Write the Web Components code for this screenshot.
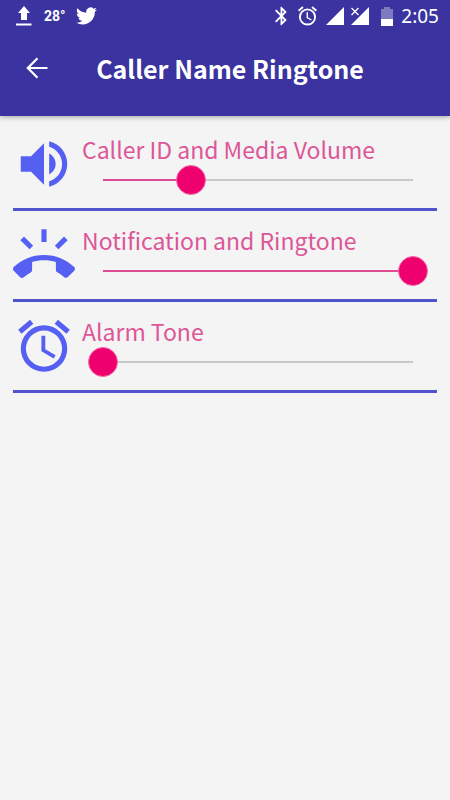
<!DOCTYPE html>
<html lang="en">
<head>
<meta charset="utf-8">
<meta name="viewport" content="width=device-width, initial-scale=1">
<title>Caller Name Ringtone</title>
<style>
  html { height: 100%; }
  body {
    margin: 0;
    min-height: 100%;
    background: #f4f4f4;
    font-family: "Noto Sans CJK SC", "Noto Sans", sans-serif;
    --bar: #3a33a0;
    --icon: #5560f2;
    --label: #dc5698;
    --accent: #ee006e;
    --rule: #5054cc;
  }
</style>
</head>
<body>
<ringtone-app></ringtone-app>

<script>
const define = (name, html, setup) => customElements.define(name, class extends HTMLElement {
  connectedCallback() {
    if (this.shadowRoot) return;
    const template = document.createElement('template');
    template.innerHTML = html;
    this.attachShadow({ mode: 'open' }).append(template.content.cloneNode(true));
    if (setup) setup(this, this.shadowRoot);
  }
});

define('status-bar', `
  <style>
    :host { display: flex; justify-content: space-between; align-items: center; height: 32px; padding: 0 11px 0 16px; color: #fff; }
    div { display: flex; align-items: center; }
    svg { display: block; fill: currentColor; }
    .temp { font: 700 14px/16px Roboto, sans-serif; margin: 0 10px 0 12px; }
    .alarm { margin: 0 9px 0 11px; }
    .sim { margin: 0 12px 0 6px; }
    time { font: 400 19px/24px "Noto Sans", sans-serif; margin-left: 8px; }
  </style>
  <div>
    <svg width="16" height="20" viewBox="0 0 16 20" aria-hidden="true"><path d="M8 0l6 7h-3v7H5V7H2zM0 17.500h15.500v2H0z"/></svg>
    <span class="temp">28°</span>
    <svg width="21" height="18" viewBox="0 2 24 20" aria-hidden="true"><path d="M23.950 4.570a10 10 0 0 1-2.820.77 4.960 4.960 0 0 0 2.160-2.720c-.95.55-2 .95-3.130 1.180a4.920 4.920 0 0 0-8.380 4.480C7.690 8.100 4.070 6.130 1.640 3.160a4.820 4.820 0 0 0-.67 2.480c0 1.710.87 3.210 2.190 4.100a4.900 4.900 0 0 1-2.230-.62v.06a4.920 4.920 0 0 0 3.950 4.830 5 5 0 0 1-2.210.08 4.940 4.940 0 0 0 4.600 3.420A9.870 9.870 0 0 1 0 19.540a14 14 0 0 0 7.560 2.210c9.050 0 14-7.500 14-13.980 0-.21 0-.42-.02-.63a9.900 9.900 0 0 0 2.410-2.570z"/></svg>
  </div>
  <div>
    <svg width="12" height="20" viewBox="5 2 13 20" aria-hidden="true"><path d="M17.710 7.710L12 2h-1v7.590L6.410 5 5 6.410 10.590 12 5 17.590 6.410 19 11 14.410V22h1l5.710-5.710-4.300-4.290 4.300-4.290zM13 5.830l1.880 1.880L13 9.590V5.830zm1.880 10.460L13 18.170v-3.760l1.880 1.880z"/></svg>
    <svg class="alarm" width="19" height="20" viewBox="2 2 20 20" aria-hidden="true"><path d="M22 5.720l-4.600-3.860-1.290 1.530 4.600 3.860L22 5.720zM7.880 3.390L6.600 1.860 2 5.710l1.290 1.530 4.590-3.850zM12.500 8H11v6l4.750 2.850.75-1.230-4-2.370V8zM12 4a9 9 0 1 0 0 18 9 9 0 0 0 0-18zm0 16a7 7 0 1 1 0-14 7 7 0 0 1 0 14z"/></svg>
    <svg width="18" height="18" viewBox="0 0 18 18" aria-hidden="true"><path d="M18 0v18H0z"/></svg>
    <svg class="sim" width="19" height="18" viewBox="0 0 19 18" aria-hidden="true"><path d="M19 0v18H1l8-8z"/><path d="M1.500 1l7 7m0-7l-7 7" stroke="#3a33a0" stroke-width="4"/><path d="M1.500 1l7 7m0-7l-7 7" stroke="#fff" stroke-width="1.300"/></svg>
    <svg width="12" height="19" viewBox="0 0 12 19" aria-hidden="true"><path opacity=".35" d="M3 0h6v2h3v10H0V2h3z"/><path d="M0 12h12v7H0z"/></svg>
    <time>2:05</time>
  </div>
`);

define('app-bar', `
  <style>
    :host { display: block; background: var(--bar); color: #fff; box-shadow: 0 1px 5px rgba(0,0,0,.35); }
    header { display: grid; grid-template-columns: 74px 1fr 64px; align-items: center; height: 72px; padding-bottom: 12px; }
    button { display: grid; place-items: center; justify-self: center; width: 48px; height: 48px; margin: 0; padding: 0; border: 0; background: none; color: inherit; }
    h1 { margin: 0; font-size: 25px; line-height: 36px; font-weight: 700; text-align: center; white-space: nowrap; }
  </style>
  <status-bar></status-bar>
  <header>
    <button type="button" aria-label="Back">
      <svg width="22" height="22" viewBox="0 0 22 22" fill="none" stroke="currentColor" stroke-width="2.200" aria-hidden="true"><path d="M11.500 1.200L1.800 11l9.700 9.800M2 11h19.500"/></svg>
    </button>
    <h1><slot></slot></h1>
  </header>
`);

define('volume-row', `
  <style>
    :host { display: grid; grid-template-columns: 62px 1fr; gap: 7px; padding: 13px 0; border-bottom: 3px solid var(--rule); }
    ::slotted(svg) { display: block; width: 62px; height: 62px; fill: var(--icon); }
    .body { display: flex; flex-direction: column; height: 62px; }
    label { font-size: 23px; line-height: 32px; color: var(--label); white-space: nowrap; }
    input {
      -webkit-appearance: none; appearance: none;
      display: block; height: 30px; margin: 0 9px 0 6px; background: none; outline: none;
    }
    input::-webkit-slider-runnable-track {
      height: 2px;
      background: linear-gradient(to right, #de4a94 var(--level), #c9c9c9 var(--level)) center / calc(100% - 30px) 2px no-repeat;
    }
    input::-webkit-slider-thumb {
      -webkit-appearance: none; appearance: none;
      width: 30px; height: 30px; margin-top: -14px; box-sizing: border-box;
      border: 1px solid #f56aaa; border-radius: 50%; background: var(--accent);
    }
  </style>
  <slot name="icon"></slot>
  <div class="body">
    <label for="level"><slot></slot></label>
    <input id="level" type="range" min="0" max="1000" step="1">
  </div>
`, (host, root) => {
  const input = root.querySelector('input');
  const paint = () => input.style.setProperty('--level', input.value / 10 + '%');
  input.value = host.getAttribute('value');
  input.addEventListener('input', paint);
  paint();
});

define('ringtone-app', `
  <style>
    :host { display: block; }
    main { padding: 4px 13px; }
  </style>
  <app-bar>Caller Name Ringtone</app-bar>
  <main>
    <volume-row value="285">
      <svg slot="icon" viewBox="0 0 24 24" aria-hidden="true"><path d="M3 9v6h4l5 5V4L7 9H3zm13.500 3c0-1.770-1.020-3.290-2.500-4.030v8.050c1.480-.73 2.500-2.250 2.500-4.020zM14 3.230v2.060c2.890.86 5 3.540 5 6.710s-2.110 5.850-5 6.710v2.060c4.010-.91 7-4.490 7-8.770s-2.990-7.860-7-8.770z"/></svg>
      Caller ID and Media Volume
    </volume-row>
    <volume-row value="1000">
      <svg slot="icon" viewBox="0 0 24 24" aria-hidden="true"><path d="M23.710 16.670C20.660 13.780 16.540 12 12 12S3.340 13.780.29 16.670c-.18.18-.29.43-.29.71s.11.53.29.71l2.480 2.480c.18.18.43.29.71.29.27 0 .52-.11.7-.28.79-.74 1.690-1.360 2.660-1.850.33-.16.56-.5.56-.9v-3.100C8.850 14.250 10.400 14 12 14s3.150.25 4.600.72v3.100c0 .39.23.74.56.9.98.49 1.870 1.120 2.660 1.850.18.18.43.28.7.28.28 0 .53-.11.71-.29l2.480-2.480c.18-.18.29-.43.29-.71s-.11-.53-.29-.71zM21.160 6.260l-1.410-1.410-3.560 3.550 1.410 1.410zM13 2h-2v5h2V2zM6.400 9.810L7.810 8.400 4.260 4.840 2.840 6.260z"/></svg>
      Notification and Ringtone
    </volume-row>
    <volume-row value="0">
      <svg slot="icon" viewBox="0 0 24 24" aria-hidden="true"><path d="M22 5.720l-4.600-3.860-1.290 1.530 4.600 3.860L22 5.720zM7.880 3.390L6.600 1.860 2 5.710l1.290 1.530 4.590-3.850zM12.500 8H11v6l4.750 2.850.75-1.230-4-2.370V8zM12 4a9 9 0 1 0 0 18 9 9 0 0 0 0-18zm0 16a7 7 0 1 1 0-14 7 7 0 0 1 0 14z"/></svg>
      Alarm Tone
    </volume-row>
  </main>
`);
</script>
</body>
</html>
